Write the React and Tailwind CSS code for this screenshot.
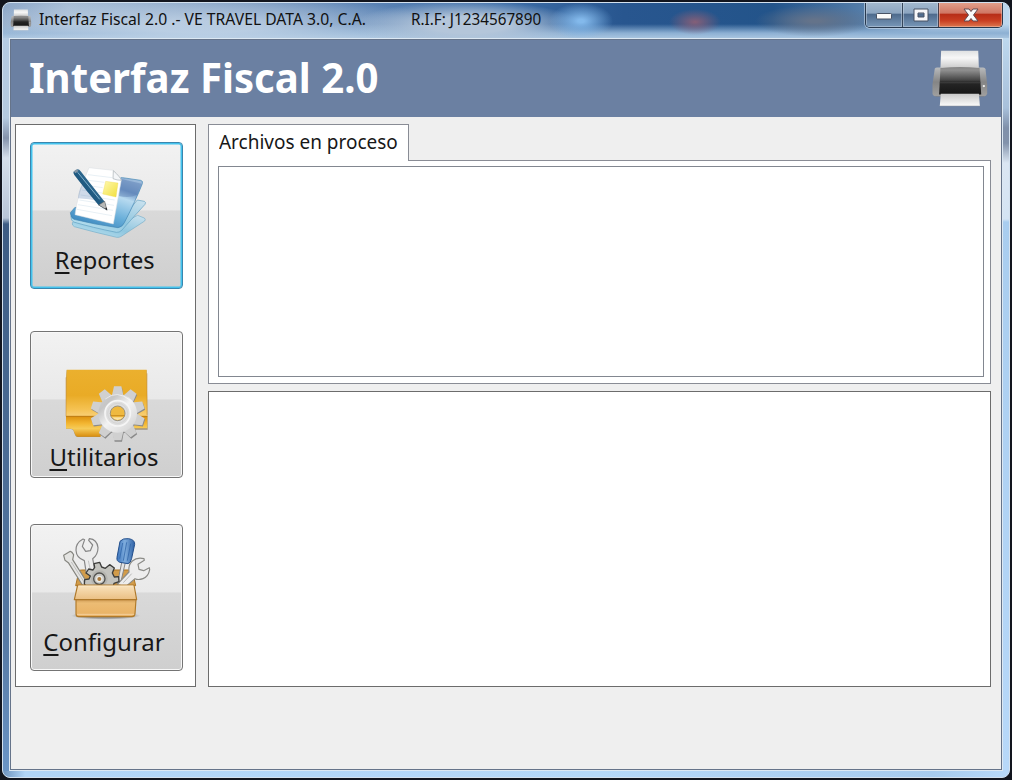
import clsx from "clsx";

function PrinterIcon({ className }) {
  return (
    <svg viewBox="752 148 174 178" className={className}>
      <defs>
        <linearGradient id="paperTop" x1="0" y1="0" x2="0" y2="1">
          <stop offset="0" stopColor="#dfe1e2" />
          <stop offset="0.4" stopColor="#f7f7f7" />
          <stop offset="1" stopColor="#c9c9c9" />
        </linearGradient>
        <linearGradient id="paperOut" x1="0" y1="0" x2="0" y2="1">
          <stop offset="0" stopColor="#c8c8c8" />
          <stop offset="1" stopColor="#fbfbfb" />
        </linearGradient>
        <linearGradient id="printerBody" x1="0" y1="0" x2="0" y2="1">
          <stop offset="0" stopColor="#858585" />
          <stop offset="0.12" stopColor="#8f8f8f" />
          <stop offset="0.48" stopColor="#454545" />
          <stop offset="0.56" stopColor="#262626" />
          <stop offset="1" stopColor="#161616" />
        </linearGradient>
        <linearGradient id="printerSide" x1="0" y1="0" x2="0" y2="1">
          <stop offset="0" stopColor="#b9bbbd" />
          <stop offset="0.5" stopColor="#858585" />
          <stop offset="1" stopColor="#a0a0a0" />
        </linearGradient>
      </defs>
      <path d="M757 283l10 10h143l10-10z" fill="#3f4b60" opacity="0.5" />
      <path d="M782 153h112l2 54H780z" fill="url(#paperTop)" />
      <path d="M763 207q2-3 7-3h14v87h-16q-10 0-12-8v-28z" fill="url(#printerSide)" />
      <path d="M895 204h14q6 0 7 5l5 46v27q-2 9-12 9h-14z" fill="url(#printerSide)" />
      <path d="M780 205q59-6 118 0l5 80H776z" fill="url(#printerBody)" />
      <path d="M778 250h124" stroke="#505050" strokeWidth="2" />
      <path d="M781 283h115l3 37H778z" fill="url(#paperOut)" />
      <path d="M778 320h121" stroke="#8c8f95" strokeWidth="1.5" />
      <circle cx="911" cy="260" r="3.5" fill="#f2f2f2" />
    </svg>
  );
}

function ReportIcon() {
  return (
    <svg viewBox="63 69 453 300" className="h-[100px] w-[151px] shrink-0">
      <defs>
        <linearGradient id="folderBlue" x1="0.8" y1="0" x2="0.3" y2="1">
          <stop offset="0" stopColor="#9dbbdb" />
          <stop offset="0.22" stopColor="#7197c6" />
          <stop offset="0.36" stopColor="#b7daf0" />
          <stop offset="0.7" stopColor="#68aed9" />
          <stop offset="1" stopColor="#3b87be" />
        </linearGradient>
        <linearGradient id="folderPale" x1="1" y1="0" x2="0" y2="1">
          <stop offset="0" stopColor="#cde3ef" />
          <stop offset="0.5" stopColor="#8fc6df" />
          <stop offset="1" stopColor="#c8eaf5" />
        </linearGradient>
        <linearGradient id="sticky" x1="0" y1="0" x2="1" y2="1">
          <stop offset="0" stopColor="#fff9b0" />
          <stop offset="1" stopColor="#f1df3b" />
        </linearGradient>
        <linearGradient id="penBlue" x1="0" y1="1" x2="1" y2="0">
          <stop offset="0" stopColor="#164466" />
          <stop offset="0.5" stopColor="#205b83" />
          <stop offset="1" stopColor="#79afcc" />
        </linearGradient>
      </defs>
      <path d="M187 308q5-8 20-5l113 15 63-32 20 8q5 4 1 9l-70 46q-6 4-14 3-70-16-127-32-8-4-6-12z" fill="url(#folderPale)" stroke="#6fa9c6" strokeWidth="1.8" />
      <path d="M183 290q5-10 22-6l124 20 53-64 21 4q6 3 2 9l-70 78q-7 7-16 6-74-15-128-31-9-5-8-16z" fill="url(#folderPale)" stroke="#5598bc" strokeWidth="1.8" />
      <path d="M181 278l14-16 110 27 25-113q2-4 8-3l54 8q8 2 5 10-19 49-54 117-6 13-19 15-72-10-132-25-10-5-11-20z" fill="url(#folderBlue)" stroke="#4185b2" strokeWidth="2" />
      <path d="M327 228q31 8 54-4l14-33-61-14z" fill="#5479ae" opacity="0.4" />
      <path d="M237 143l72 8 25 29-24 132-115-28q8-65 42-141z" fill="#fff" stroke="#d8dce1" strokeWidth="1.5" />
      <g stroke="#d4e3ed" strokeWidth="1.6">
        <path d="M234 164l73 9M227 180l56 7M221 195l57 8M216 210l60 9M212 225l102 15M208 240l104 16M204 254l105 17M201 268l105 19" />
      </g>
      <path d="M310 152l-1 24q12 5 25 5-3-10-24-29z" fill="#f4f6f8" stroke="#a0a7ad" strokeWidth="1.8" />
      <path d="M287 184l37 5-6 42-40-9z" fill="url(#sticky)" stroke="#ecd94b" strokeWidth="1" />
      <path d="M217 192q-12 21-13 43 33 2 65 9z" fill="#527baf" opacity="0.28" />
      <path d="M194 153l9-5q5 0 9 6l72 91 7 26-25-15q-35-41-73-91-6-10 1-12z" fill="url(#penBlue)" />
      <path d="M203 157l66 81" stroke="#9bc7df" strokeWidth="3" opacity="0.8" />
      <path d="M266 255l18-11 7 26z" fill="#b7b9b8" stroke="#555" strokeWidth="1.5" />
      <path d="M285 264l7 8-2-9z" fill="#222" />
      <path d="M191 154l9-6 6 5-10 7z" fill="#8395a5" />
    </svg>
  );
}

// angles of the ten teeth on the utilities gear
const teeth = [0, 36, 72, 108, 144, 180, 216, 252, 288, 324];

function FolderGearIcon() {
  return (
    <svg viewBox="63 36 453 330" className="h-[110px] w-[151px] shrink-0">
      <defs>
        <linearGradient id="folderGold" x1="0" y1="0" x2="0" y2="1">
          <stop offset="0" stopColor="#ebb02e" />
          <stop offset="0.55" stopColor="#e9ab26" />
          <stop offset="0.85" stopColor="#f5c252" />
          <stop offset="1" stopColor="#f8d078" />
        </linearGradient>
        <linearGradient id="folderBase" x1="0" y1="0" x2="0" y2="1">
          <stop offset="0" stopColor="#dc910f" />
          <stop offset="0.35" stopColor="#f3b632" />
          <stop offset="0.6" stopColor="#f6cb58" />
          <stop offset="1" stopColor="#d88d0e" />
        </linearGradient>
        <linearGradient id="gearSilver" x1="247" y1="200" x2="400" y2="360" gradientUnits="userSpaceOnUse">
          <stop offset="0" stopColor="#dcdcdc" />
          <stop offset="0.3" stopColor="#c6c6c6" />
          <stop offset="0.5" stopColor="#f2f2f2" />
          <stop offset="1" stopColor="#c2c2c2" />
        </linearGradient>
      </defs>
      <path d="M168 173l2-22h240l3 178H275l-5 22h-67q-6 0-8-7l-5-13q-3-4-9-4h-13z" fill="#7b6640" opacity="0.6" />
      <path d="M168 289h244v36H272v25h-69q-6 0-8-7l-5-13q-3-4-9-4h-13z" fill="url(#folderBase)" />
      <path d="M170 149h240l2 140H168l1-119z" fill="url(#folderGold)" />
      <path d="M168 289h244" stroke="#bd7a0d" strokeWidth="3" />
      <path d="M168 172v117M411 160v125" stroke="#c1872a" strokeWidth="1.5" />
      <g transform="translate(2 4)" fill="#8a8a8a">
        {teeth.map((a) => (
          <path key={a} d="M307 226l5-27h22l5 27z" transform={`rotate(${a} 323 280)`} />
        ))}
        <circle cx="323" cy="280" r="58" />
      </g>
      {teeth.map((a) => (
        <path key={a} d="M305 230l7-31h22l7 31z" fill="#d0d0d0" transform={`rotate(${a} 323 280)`} />
      ))}
      <circle cx="323" cy="280" r="58" fill="url(#gearSilver)" />
      <path d="M286 237q35-29 75 4" fill="none" stroke="#fff" strokeWidth="3" opacity="0.6" />
      <circle cx="323" cy="280" r="38" fill="#dedede" stroke="#f5f5f5" strokeWidth="5" />
      <circle cx="323" cy="280" r="30" fill="none" stroke="#cfcfcf" strokeWidth="2" />
      <circle cx="323" cy="280" r="22" fill="#efb93f" stroke="#969080" strokeWidth="3" />
      <path d="M302 287h42" stroke="#c88a1c" strokeWidth="3" />
      <path d="M306 292q16 16 34 0z" fill="#fbe3a5" />
    </svg>
  );
}

function ToolboxIcon() {
  return (
    <svg viewBox="63 45 453 300" className="h-[100px] w-[151px] shrink-0">
      <defs>
        <linearGradient id="boxFlap" x1="0" y1="0" x2="0" y2="1">
          <stop offset="0" stopColor="#fae3bd" />
          <stop offset="1" stopColor="#eabf83" />
        </linearGradient>
        <linearGradient id="boxFront" x1="0" y1="0" x2="0" y2="1">
          <stop offset="0" stopColor="#ce9b55" />
          <stop offset="0.22" stopColor="#ecbc74" />
          <stop offset="1" stopColor="#e9b163" />
        </linearGradient>
        <linearGradient id="handleBlue" x1="0" y1="0" x2="1" y2="0">
          <stop offset="0" stopColor="#3a73bc" />
          <stop offset="0.45" stopColor="#7faddd" />
          <stop offset="1" stopColor="#2f62a6" />
        </linearGradient>
        <radialGradient id="boxShadow">
          <stop offset="0.6" stopColor="#777" stopOpacity="0.7" />
          <stop offset="1" stopColor="#777" stopOpacity="0" />
        </radialGradient>
      </defs>
      <ellipse cx="287" cy="317" rx="104" ry="12" fill="url(#boxShadow)" />
      <path d="M207 183q2-3 8-3h143q7 0 9 4l10 43H197z" fill="#d29c4a" stroke="#ad7522" strokeWidth="3" />

      {/* wrench and file on the left */}
      <path d="M229 190l-6-38q-24-8-25-31-1-22 21-34l5 2-7 20 10 15 14-2 7-17-12-14 2-5q23 2 26 27 0 21-16 33l8 42z" fill="#ececec" stroke="#858585" strokeWidth="3.5" strokeLinejoin="round" />
      <path d="M235 152l7 32" stroke="#c4c4c4" strokeWidth="3" />
      <path d="M161 136l20-12q5 1 10 10l-3 15 44 70-13 9-44-70-10-7z" fill="#e4e4e2" stroke="#85857f" strokeWidth="3.5" strokeLinejoin="round" />
      <path d="M184 156l42 66" stroke="#aaa" strokeWidth="2" />

      {/* screwdriver and wrench on the right */}
      <path d="M336 153h11l-15 66-10 3z" fill="#e5e5e5" stroke="#868686" strokeWidth="3" />
      <path d="M330 94q8-10 26-8 19 3 18 17l-9 42q-3 15-11 16l-24-4q-11-3-9-15z" fill="url(#handleBlue)" stroke="#234f8c" strokeWidth="3" />
      <path d="M338 99l-9 47M350 97l-10 55M362 101l-10 51" stroke="#2c61a5" strokeWidth="3" opacity="0.7" />
      <path d="M321 224l36-38q-3-22 10-33 14-12 35-7l1 5-19 12 3 15 14 4 17-9 1 6q-4 21-20 27-14 5-24 0l-28 24z" fill="#ededed" stroke="#8b8b87" strokeWidth="3.5" strokeLinejoin="round" />
      <path d="M365 191l-25 27" stroke="#b9b9b9" strokeWidth="3" />

      <path
        d="M254 172l-2-11 17-4 6 14 11 4 13-11 14 10-6 15 6 12 13-1 1 15-15 5-3 10H231l-8-7 1-14 13-2 4-9-13-9 8-12 13 3z"
        fill="#c3c3be"
        stroke="#3d3d3b"
        strokeWidth="4"
        strokeLinejoin="round"
      />
      <circle cx="268" cy="206" r="25" fill="#b5b5b0" />
      <circle cx="268" cy="206" r="17" fill="#c9c9c5" stroke="#50504d" strokeWidth="4" />
      <circle cx="268" cy="207" r="8" fill="#aa7a3b" stroke="#ecece8" strokeWidth="4" />

      <path d="M198 268h180l-3 43q-1 9-9 9H206q-8 0-8-9z" fill="url(#boxFront)" stroke="#b07a2a" strokeWidth="3.5" />
      <path d="M203 225h169l8 44H193z" fill="url(#boxFlap)" stroke="#af792b" strokeWidth="3.5" strokeLinejoin="round" />
      <path d="M206 228h163M201 313h172" stroke="#fff3dc" strokeWidth="2" opacity="0.7" />
    </svg>
  );
}

const menuItems = [
  { name: "Reportes", icon: <ReportIcon />, focused: true, box: "h-[147px]", label: "mt-[1px] -ml-[4px] scale-x-[0.985]" },
  { name: "Utilitarios", icon: <FolderGearIcon />, box: "mt-[42px] h-[147px]", label: "-mt-[1px] -ml-[5px]" },
  { name: "Configurar", icon: <ToolboxIcon />, box: "mt-[46px] h-[147px]", label: "mt-[1px] -ml-[5px]" },
];

function MenuButton({ item }) {
  return (
    <button
      className={clsx(
        "flex w-[153px] shrink-0 flex-col items-center rounded-[4px] border bg-[linear-gradient(to_bottom,#f2f2f2_0%,#e9e9e9_46%,#d9d9d9_47%,#cfcfcf_100%)]",
        item.focused
          ? "border-[#3a86ae] shadow-[inset_0_0_0_1.5px_#43c3ee]"
          : "border-[#747474] shadow-[inset_0_0_0_1px_#f8f8f8]",
        item.box
      )}
    >
      {item.icon}
      <span className={clsx("inline-block whitespace-nowrap text-[24px] leading-[32px] text-[#171717]", item.label)}>
        <span className="underline decoration-[1.5px] underline-offset-[3px]">{item.name[0]}</span>
        {item.name.slice(1)}
      </span>
    </button>
  );
}

function TitleBar() {
  return (
    <div className="flex h-[35px] shrink-0 items-start justify-between bg-[radial-gradient(ellipse_32px_18px_at_578px_18px,#83b9eb_10%,transparent_100%),radial-gradient(ellipse_26px_13px_at_692px_19px,#855f78_0%,transparent_100%),radial-gradient(ellipse_60px_16px_at_812px_18px,#64738a_10%,transparent_100%),radial-gradient(ellipse_115px_24px_at_465px_22px,#b4c6da_35%,transparent_100%),radial-gradient(ellipse_260px_30px_at_200px_24px,#c5d6e8cc_20%,transparent_100%),linear-gradient(to_bottom,transparent_60%,#8db0d3_86%,#a7c4df_100%),linear-gradient(to_right,#8ea8c8_0px,#a5bbd4_65px,#7b9ac0_250px,#5f86b6_350px,#3d6da7_500px,#28568f_620px,#23548a_770px,#547da9_860px,#a7c2df_930px,#bdd8ee_1006px)]">
      <div className="flex h-[33px] items-center pl-[7px]">
        <PrinterIcon className="h-[22px] w-[22px]" />
        <div className="ml-[7px] w-[372px] whitespace-nowrap text-[16.5px] text-[#111]">
          <span className="inline-block origin-left scale-x-[0.952]">Interfaz Fiscal 2.0 .- VE TRAVEL DATA 3.0, C.A.</span>
        </div>
        <span className="inline-block origin-left scale-x-[0.925] whitespace-nowrap text-[16.5px] text-[#111]">R.I.F: J1234567890</span>
      </div>
      <div className="mr-[6px] -mt-[1px] flex h-[26px] overflow-hidden rounded-b-[5px] border border-t-0 border-[#28394e] shadow-[0_0_0_1px_#c9dbed99]">
        <div className="flex w-[37px] items-end justify-center border-r border-[#36475b] bg-[linear-gradient(to_bottom,#a3b9cf_0%,#8ca5c0_45%,#4d6a8c_48%,#7897b8_100%)] pb-[7px] shadow-[inset_0_0_0_1px_#c3d1df88]">
          <svg viewBox="0 0 16 7" className="h-[7px] w-[16px]">
            <rect x="0.5" y="0.5" width="15" height="5.5" rx="1" fill="#fafafa" stroke="#485365" />
          </svg>
        </div>
        <div className="flex w-[36px] items-center justify-center border-r border-[#4a3e4a] bg-[linear-gradient(to_bottom,#a3b9cf_0%,#8ca5c0_45%,#4d6a8c_48%,#7897b8_100%)] shadow-[inset_0_0_0_1px_#c3d1df88]">
          <svg viewBox="0 0 16 14" className="h-[14px] w-[16px]">
            <path d="M1 1h14v12H1z M5 5v4h6V5z" fill="#f7f8fa" fillRule="evenodd" stroke="#485365" />
          </svg>
        </div>
        <div className="flex w-[63px] items-center justify-center bg-[linear-gradient(to_bottom,#e3a28e_0%,#cf7663_45%,#b62d17_48%,#c93f22_75%,#dc7850_100%)] shadow-[inset_0_0_0_1px_#f2c2ae88]">
          <svg viewBox="0 0 16 14" className="h-[14px] w-[16px]">
            <path d="M1 1h5l2 2.500L10 1h5l-4.500 6L15 13h-5l-2-2.500L6 13H1l4.500-6z" fill="#fafafa" stroke="#604a52" />
          </svg>
        </div>
      </div>
    </div>
  );
}

function Header() {
  return (
    <div className="flex h-[77px] shrink-0 items-center justify-between bg-[#6b80a2] pl-[18px] pr-[12px]">
      <h1 className="-mt-[4px] origin-left scale-x-[0.956] whitespace-nowrap text-[42px] font-bold leading-[50px] text-white">
        Interfaz Fiscal 2.0
      </h1>
      <PrinterIcon className="h-[59px] w-[58px]" />
    </div>
  );
}

function App() {
  return (
    <div className="h-[780px] w-[1012px] overflow-hidden bg-[#12151e] p-[2px] font-['Noto_Sans','Open_Sans',sans-serif]">
      <div className="flex h-full w-full flex-col overflow-hidden rounded-[8px] border border-[#d3e1ef] bg-[#b3d3f3]">
        <TitleBar />
        <div className="flex min-h-0 flex-1">
          <div className="w-[6px] shrink-0 bg-[linear-gradient(to_bottom,#b4cbe3_0px,#b4c9df_80px,#8493ac_100px,#d5dfeb_120px,#b7c5d7_180px,#3d5c84_186px,#5679a3_600px,#6a94c5_100%)]" />
          <div className="flex flex-1 border border-[#dce8f3]">
            <div className="flex flex-1 flex-col border border-[#66748a] bg-[#efefef]">
              <Header />
              <div className="flex pl-[4px] pt-[7px]">
                <div className="flex h-[563px] w-[181px] flex-col border border-[#6c6c6c] bg-white pl-[14px] pt-[17px]">
                  {menuItems.map((item) => (
                    <MenuButton key={item.name} item={item} />
                  ))}
                </div>

                <div className="ml-[12px] flex w-[783px] flex-col">
                  <div className="z-10 -mb-px flex h-[37px] w-[201px] items-center border border-b-0 border-[#898c95] bg-white pl-[10px]">
                    <span className="-mt-[2px] origin-left scale-x-[0.973] whitespace-nowrap text-[19.5px] leading-[34px] text-[#171717]">
                      Archivos en proceso
                    </span>
                  </div>
                  <div className="h-[224px] border border-[#898c95] bg-white px-[6px] pb-[6px] pt-[5px] pl-[9px]">
                    <div className="h-[211px] border border-[#828790]" />
                  </div>
                  <div className="mt-[7px] h-[296px] border border-[#6c6c6c] bg-white" />
                </div>
              </div>
            </div>
          </div>
          <div className="w-[6px] shrink-0 bg-[linear-gradient(to_bottom,#bdd8ee_0px,#a8c0da_70px,#7f90aa_90px,#8292ab_105px,#dbe6f2_125px,#d4e4f4_181px,#a9cdef_184px,#b7d8f9_100%)]" />
        </div>
        <div className="h-[6px] shrink-0 bg-[linear-gradient(to_right,#6d93be_0px,#b1d5f7_22px,#b5d8f9_600px,#a7cbee_930px,#b9dafa_1006px)]" />
      </div>
    </div>
  );
}

export default App;
